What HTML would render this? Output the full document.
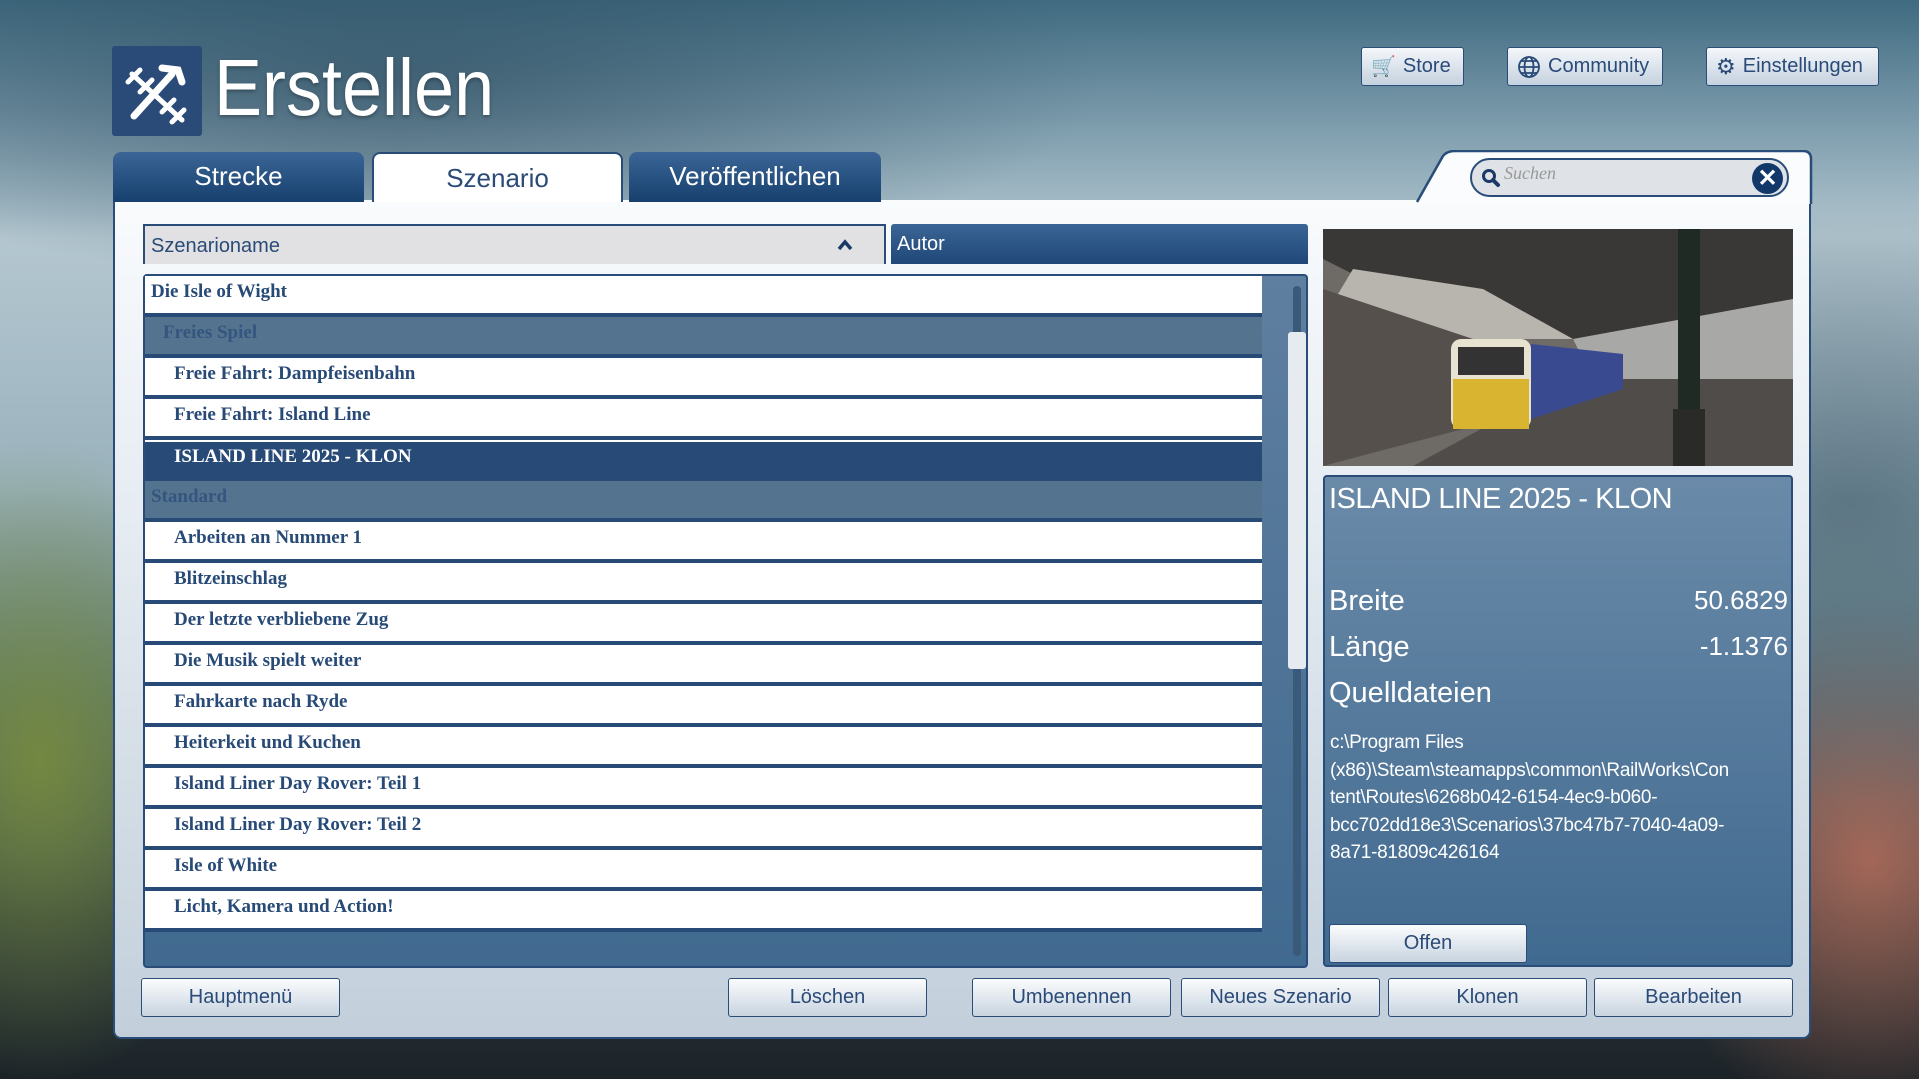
<!DOCTYPE html>
<html><head><meta charset="utf-8"><style>
*{box-sizing:border-box;margin:0;padding:0}
body{width:1919px;height:1079px;overflow:hidden;position:relative;font-family:"Liberation Sans",sans-serif;
background:
radial-gradient(ellipse 500px 300px at 1850px 500px,rgba(70,95,110,.7),transparent),
radial-gradient(ellipse 220px 320px at 40px 760px,rgba(120,140,60,.9),transparent),
radial-gradient(ellipse 240px 260px at 1870px 860px,rgba(190,110,90,.8),transparent),
radial-gradient(ellipse 700px 200px at 400px 80px,rgba(40,70,90,.6),transparent),
linear-gradient(180deg,#3f6a80 0%,#7f9eae 12%,#b4c7d0 22%,#9ab2bd 45%,#55727a 65%,#2c3a3e 85%,#1c2328 100%);}
.abs{position:absolute}
.logo{left:112px;top:46px;width:90px;height:90px;background:#2a4a78;border-radius:3px}
.title{left:214px;top:42px;font-size:80px;color:#fff;transform:scaleX(.9);transform-origin:left;text-shadow:0 2px 4px rgba(0,0,0,.3)}
.tbtn{top:47px;height:39px;border:1px solid #2c4c78;border-radius:3px;background:linear-gradient(#f4f7fa,#c5d2df);color:#2a4a78;font-size:20px;display:flex;align-items:center;gap:7px;padding-left:9px}
.tab{top:152px;height:50px;border-radius:8px 8px 0 0;font-size:26px;text-align:center;line-height:48px;color:#fff;background:linear-gradient(#3a6596,#17406e)}
.panel{left:113px;top:200px;width:1698px;height:839px;border:2px solid #2a4c78;border-top:none;border-radius:0 0 8px 8px;background:linear-gradient(#f9fbfd 0%,#e4ebf1 40%,#c2cfdb 100%)}
.hdr{top:224px;height:40px;font-size:20px;line-height:40px;padding-left:6px}
.list{left:143px;top:274px;width:1165px;height:694px;background:linear-gradient(#5f7fa0,#416a90);border:2px solid #2a4c78;border-radius:4px}
.row{position:absolute;left:0;width:1117px;height:41px;border-bottom:4px solid #284a77;font-family:"Liberation Serif",serif;font-weight:bold;font-size:19px;line-height:32px;color:#284a77;background:#fff}
.g{background:#53738f;color:#35557e}
.s{background:#284a77;color:#fff;border-top:2px solid #fff;line-height:30px}
.bbtn{top:978px;height:39px;width:199px;border:1px solid #2c4c78;border-radius:3px;background:linear-gradient(#fbfcfd,#c8d4e0);color:#2a4a78;font-size:20px;text-align:center;line-height:37px}
.info{left:1323px;top:475px;width:470px;height:492px;border:2px solid #2a4c78;border-radius:4px;background:linear-gradient(#6a8aa8,#416a90);color:#fff}
</style></head><body>
<div class="abs logo"><svg width="90" height="90" viewBox="0 0 90 90"><g stroke="#fff" stroke-width="7" stroke-linecap="round" fill="none"><path d="M22 70 L60 28"/><path d="M50 22 L66 24 L70 36"/><path d="M20 28 L70 74" stroke-width="5"/><path d="M16 36 L28 24 M28 46 L40 34 M50 66 L62 54 M60 76 L72 64" stroke-width="5"/></g></svg></div>
<div class="abs title">Erstellen</div>
<div class="abs tbtn" style="left:1361px;width:103px"><span>🛒</span>Store</div>
<div class="abs tbtn" style="left:1507px;width:156px"><svg width="24" height="24" viewBox="0 0 24 24" fill="none" stroke="#2a4a78" stroke-width="1.8"><circle cx="12" cy="12" r="10"/><ellipse cx="12" cy="12" rx="4.5" ry="10"/><path d="M2 12h20M4 6h16M4 18h16"/></svg>Community</div>
<div class="abs tbtn" style="left:1706px;width:173px"><span style="font-size:22px">⚙</span>Einstellungen</div>
<div class="abs panel"></div>
<div class="abs tab" style="left:113px;width:251px">Strecke</div>
<div class="abs tab" style="left:372px;width:251px;background:#fff;color:#2a4a78;border:2px solid #2a4c78;border-bottom:none">Szenario</div>
<div class="abs tab" style="left:629px;width:252px">Veröffentlichen</div>
<svg class="abs" style="left:1415px;top:150px" width="400" height="54"><path d="M2 52 L28 6 Q32 1 40 1 L388 1 Q396 1 396 9 L396 54" fill="#fafcfd" stroke="#2a4c78" stroke-width="2.5"/></svg>
<div class="abs" style="left:1470px;top:158px;width:319px;height:39px;border:2px solid #2a4c78;border-radius:20px;background:#dfe2e6"></div>
<svg class="abs" style="left:1481px;top:168px" width="20" height="20"><circle cx="8" cy="8" r="5.5" fill="none" stroke="#1a3a66" stroke-width="3"/><path d="M12 12 L17 17" stroke="#1a3a66" stroke-width="4" stroke-linecap="round"/></svg>
<div class="abs" style="left:1504px;top:163px;font-family:'Liberation Serif',serif;font-style:italic;font-size:18px;color:#999">Suchen</div>
<div class="abs" style="left:1752px;top:163px;width:31px;height:31px;border-radius:50%;background:#12386a;color:#fff;font-size:24px;font-weight:bold;text-align:center;line-height:31px">✕</div>
<div class="abs hdr" style="left:143px;width:743px;background:#e1e1e3;border:2px solid #2a4c78;border-bottom:none;color:#2a4a78">Szenarioname<svg style="position:absolute;left:692px;top:13px" width="16" height="12"><path d="M2 10 L8 3 L14 10" fill="none" stroke="#1a3a66" stroke-width="3.5"/></svg></div>
<div class="abs hdr" style="left:891px;width:417px;background:linear-gradient(#3b6596,#1f4878);color:#fff;border-radius:3px 3px 0 0">Autor</div>
<div class="abs list">
<div class="row" style="top:0;padding-left:6px">Die Isle of Wight</div>
<div class="row g" style="top:41px;padding-left:18px">Freies Spiel</div>
<div class="row" style="top:82px;padding-left:29px">Freie Fahrt: Dampfeisenbahn</div>
<div class="row" style="top:123px;padding-left:29px">Freie Fahrt: Island Line</div>
<div class="row s" style="top:164px;padding-left:29px">ISLAND LINE 2025 - KLON</div>
<div class="row g" style="top:205px;padding-left:6px">Standard</div>
<div class="row" style="top:246px;padding-left:29px">Arbeiten an Nummer 1</div>
<div class="row" style="top:287px;padding-left:29px">Blitzeinschlag</div>
<div class="row" style="top:328px;padding-left:29px">Der letzte verbliebene Zug</div>
<div class="row" style="top:369px;padding-left:29px">Die Musik spielt weiter</div>
<div class="row" style="top:410px;padding-left:29px">Fahrkarte nach Ryde</div>
<div class="row" style="top:451px;padding-left:29px">Heiterkeit und Kuchen</div>
<div class="row" style="top:492px;padding-left:29px">Island Liner Day Rover: Teil 1</div>
<div class="row" style="top:533px;padding-left:29px">Island Liner Day Rover: Teil 2</div>
<div class="row" style="top:574px;padding-left:29px">Isle of White</div>
<div class="row" style="top:615px;padding-left:29px">Licht, Kamera und Action!</div>
<div style="position:absolute;left:1148px;top:10px;width:8px;height:670px;background:#3a5a7a;border-radius:4px"></div>
<div style="position:absolute;left:1143px;top:56px;width:18px;height:337px;background:#e6ebf0;border-radius:3px"></div>
</div>
<svg class="abs" style="left:1323px;top:229px" width="470" height="237" viewBox="0 0 470 237">
<rect width="470" height="237" fill="#6e6a66"/>
<polygon points="0,0 470,0 470,70 250,110 160,110 0,30" fill="#3a3836"/>
<polygon points="30,40 160,60 250,110 140,110 0,90" fill="#b8b4ae"/>
<polygon points="0,60 150,110 140,200 0,237" fill="#55504b"/>
<polygon points="250,110 470,70 470,150 270,150" fill="#a8a8a6"/>
<polygon points="90,237 250,150 470,150 470,237" fill="#4f4c4a"/>
<rect x="128" y="110" width="80" height="90" rx="10" fill="#e8e2d0"/>
<rect x="135" y="118" width="66" height="28" fill="#333"/>
<rect x="130" y="150" width="76" height="50" fill="#d9b430"/>
<polygon points="208,115 300,125 300,160 208,190" fill="#3a4a90"/>
<rect x="355" y="0" width="22" height="237" fill="#1f2a25"/>
<rect x="350" y="180" width="32" height="57" fill="#2a2a28"/>
</svg>
<div class="abs info">
<div style="position:absolute;left:4px;top:6px;font-size:29px;letter-spacing:-.5px">ISLAND LINE 2025 - KLON</div>
<div style="position:absolute;left:4px;top:108px;font-size:29px">Breite</div><div style="position:absolute;right:3px;top:108px;font-size:26px">50.6829</div>
<div style="position:absolute;left:4px;top:154px;font-size:29px">Länge</div><div style="position:absolute;right:3px;top:154px;font-size:26px">-1.1376</div>
<div style="position:absolute;left:4px;top:200px;font-size:29px">Quelldateien</div>
<div style="position:absolute;left:5px;top:252px;width:470px;font-size:19px;line-height:27.5px;white-space:nowrap;letter-spacing:-.3px">c:\Program Files<br>(x86)\Steam\steamapps\common\RailWorks\Con<br>tent\Routes\6268b042-6154-4ec9-b060-<br>bcc702dd18e3\Scenarios\37bc47b7-7040-4a09-<br>8a71-81809c426164</div>
</div>
<div class="abs bbtn" style="left:1329px;top:924px;width:198px">Offen</div>
<div class="abs bbtn" style="left:141px">Hauptmenü</div>
<div class="abs bbtn" style="left:728px">Löschen</div>
<div class="abs bbtn" style="left:972px">Umbenennen</div>
<div class="abs bbtn" style="left:1181px">Neues Szenario</div>
<div class="abs bbtn" style="left:1388px">Klonen</div>
<div class="abs bbtn" style="left:1594px">Bearbeiten</div>
</body></html>
